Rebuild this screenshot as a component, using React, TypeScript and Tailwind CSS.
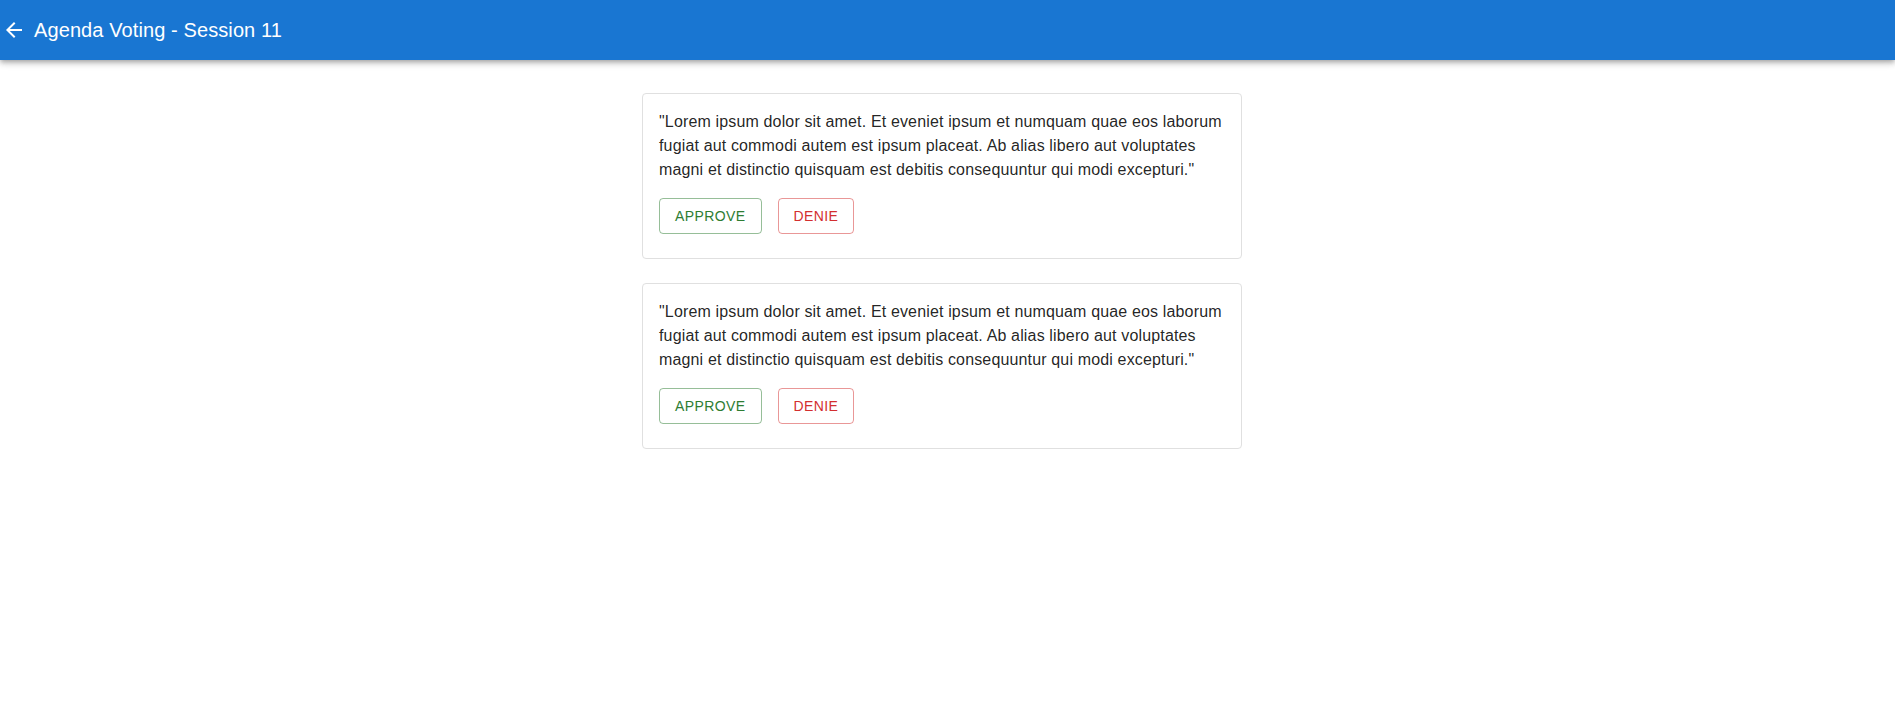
import React from "react";

const text =
  '"Lorem ipsum dolor sit amet. Et eveniet ipsum et numquam quae eos laborum fugiat aut commodi autem est ipsum placeat. Ab alias libero aut voluptates magni et distinctio quisquam est debitis consequuntur qui modi excepturi."';

function AgendaCard() {
  return (
    <div className="w-[600px] rounded-[4px] border border-[#e0e0e0] bg-white">
      <div className="px-4 pt-4 pb-6">
        <p className="text-[16px] leading-[24px] tracking-[0.15px] text-[rgba(0,0,0,0.87)]">{text}</p>
        <div className="mt-4 flex gap-4">
          <button className="h-9 rounded-[4px] border border-[rgba(46,125,50,0.5)] px-[15px] text-[14px] uppercase tracking-[0.4px] text-[#2e7d32]">
            Approve
          </button>
          <button className="h-9 rounded-[4px] border border-[rgba(211,47,47,0.5)] px-[15px] text-[14px] uppercase tracking-[0.4px] text-[#d32f2f]">
            Denie
          </button>
        </div>
      </div>
    </div>
  );
}

export default function App() {
  return (
    <div className="min-h-[712px] bg-white font-['Liberation_Sans',Arial,sans-serif]">
      <header className="relative z-10 flex h-[60px] items-center bg-[#1976d2] pl-[2px] text-white shadow-[0_2px_4px_-1px_rgba(0,0,0,0.2),0_4px_5px_0_rgba(0,0,0,0.14),0_1px_10px_0_rgba(0,0,0,0.12)]">
        <svg viewBox="0 0 24 24" className="h-6 w-6 fill-white">
          <path d="M20 11H7.83l5.59-5.59L12 4l-8 8 8 8 1.41-1.41L7.83 13H20v-2z" />
        </svg>
        <h1 className="ml-2 text-[20px] leading-[24px] tracking-[0.1px]">Agenda Voting - Session 11</h1>
      </header>
      <main className="flex flex-col items-center gap-6 pt-[33px] pr-[11px]">
        <AgendaCard />
        <AgendaCard />
      </main>
    </div>
  );
}
